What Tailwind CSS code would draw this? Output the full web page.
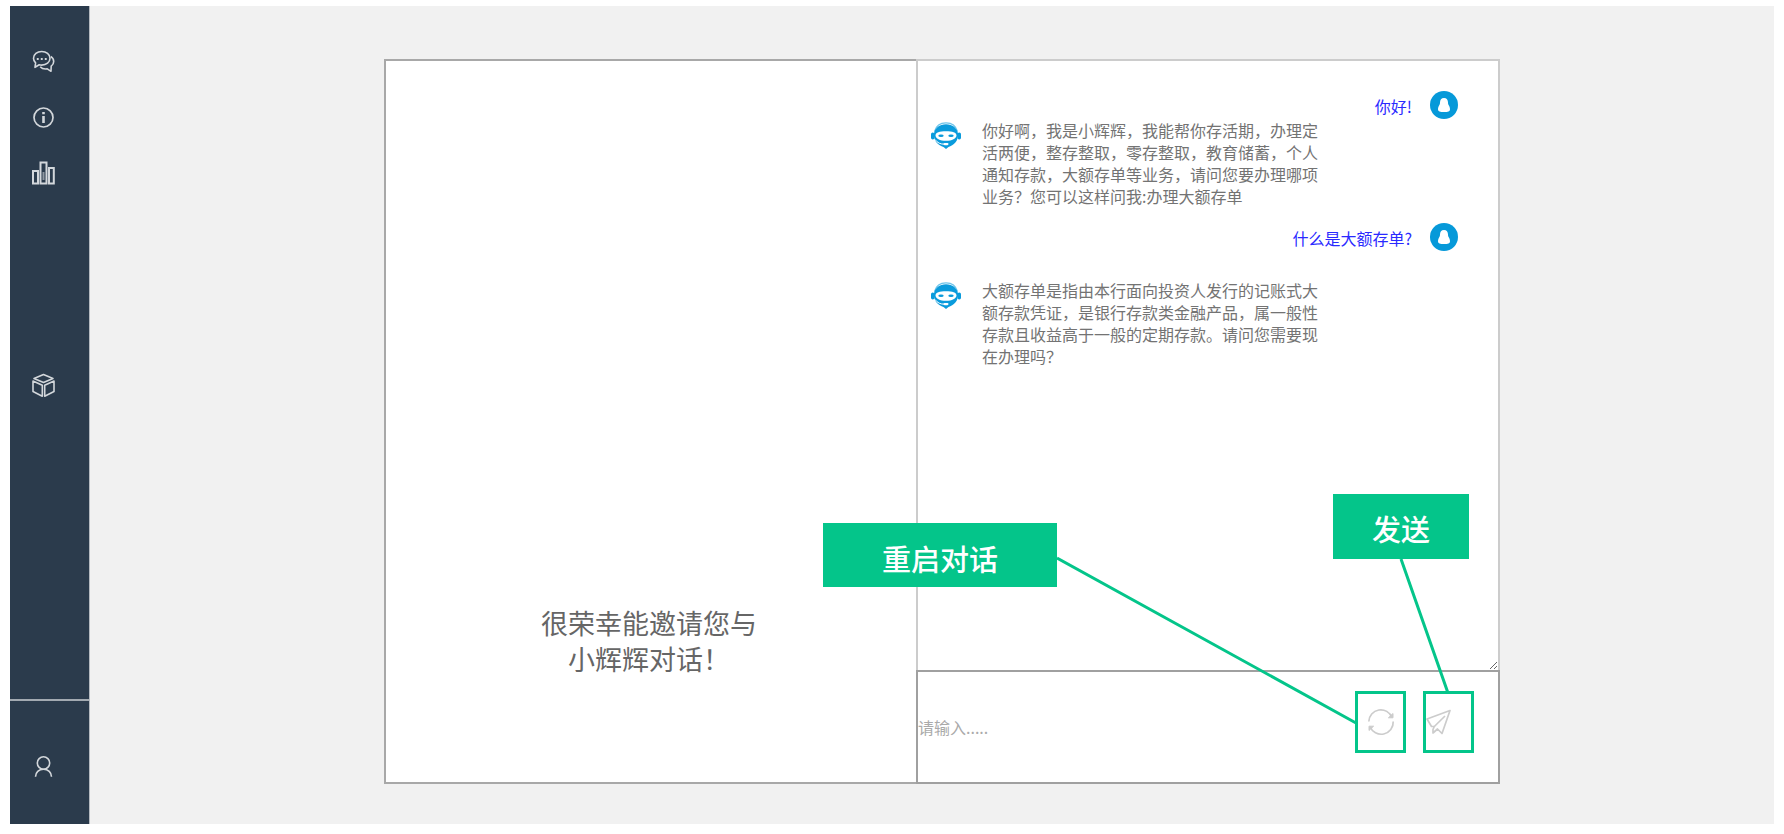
<!DOCTYPE html>
<html lang="zh-CN">
<head>
<meta charset="UTF-8">
<meta name="viewport" content="width=device-width, initial-scale=1">
<title>小辉辉对话</title>
<script src="https://cdn.jsdelivr.net/npm/@tailwindcss/browser@4"></script>
</head>
<body class="bg-white font-['Noto_Sans_CJK_SC',sans-serif]">
<svg class="hidden" aria-hidden="true">
  <symbol id="robot" viewBox="0 0 30 27">
    <path d="M3.500 9.500C5 4 9 .8 15 .8s10 3.200 11.500 8.700" fill="none" stroke="#0a9bdc" stroke-opacity=".6" stroke-width="1.200"/>
    <path d="M3 11.500C4 6 8.500 2.200 15 2.200S26 6 27 11.500c.8 7.500-4.500 12-9.500 13.500L15 27l-2.500-2C7.500 23.500 2.200 19 3 11.500z" fill="#0a9bdc"/>
    <rect x="0" y="10.500" width="3.500" height="7" rx="1.700" fill="#0a9bdc"/>
    <rect x="26.500" y="10.500" width="3.500" height="7" rx="1.700" fill="#0a9bdc"/>
    <path d="M4.500 13.500c0-3 4-4.300 10.500-4.300s10.500 1.300 10.500 4.300-4.500 5.300-10.500 5.300-10.500-2.300-10.500-5.300z" fill="#fff"/>
    <ellipse cx="10" cy="13.700" rx="2.700" ry="1.300" fill="#0a9bdc"/>
    <ellipse cx="20" cy="13.700" rx="2.700" ry="1.300" fill="#0a9bdc"/>
    <path d="M4 17.500c2.500 3.500 5.500 4.700 9.500 4.700" fill="none" stroke="#fff" stroke-width="1"/>
    <rect x="12.500" y="21" width="5" height="2.200" rx="1.100" fill="#fff"/>
  </symbol>
  <symbol id="guest" viewBox="0 0 28 28">
    <circle cx="14" cy="14" r="14" fill="#0699d9"/>
    <path d="M14 7c-2.700 0-4 2-4 4.500 0 1.200-.2 2-.9 3C8.300 15.700 8 17 8 18.500c0 2 2 2.500 6 2.500s6-.5 6-2.500c0-1.500-.3-2.800-1.100-4-.7-1-.9-1.800-.9-3C18 9 16.700 7 14 7z" fill="#fff"/>
  </symbol>
</svg>
<div class="flex min-h-screen pt-[6px] pr-[10px] pb-[10px] pl-[10px]">
  <nav class="flex w-20 shrink-0 flex-col border-r border-[#b5bac0] bg-[#2b3b4c] text-[#d3d7db]" aria-label="主导航">
    <div class="flex flex-1 flex-col items-start gap-8 pt-[43px] pl-[22px]">
      <a href="#chat" aria-label="对话">
        <svg class="size-6" viewBox="0 0 24 24" fill="none" stroke="currentColor" stroke-width="1.600" stroke-linejoin="round">
          <path d="M3.600 13.800C2.200 12.500 1.500 11 1.500 9.300c0-3.900 3.600-6.800 8.200-6.800s8.300 2.900 8.300 6.800-3.700 6.800-8.300 6.800c-.9 0-1.700-.1-2.500-.3L3 18.300z"/>
          <path d="M18.800 7.500c1.900 1.200 2.900 2.800 2.900 4.900 0 1.900-.9 3.500-2.500 4.700l-.2 5.200-3.700-2.400c-3 .5-5.500-.3-7.100-2.200"/>
          <path d="M4.800 10h1.900M8.800 10h1.900M12.800 10h1.900" stroke-width="1.800"/>
        </svg>
      </a>
      <a href="#about" aria-label="信息">
        <svg class="size-6" viewBox="0 0 24 24" fill="none" stroke="currentColor">
          <circle cx="11.500" cy="12.500" r="9.500" stroke-width="1.700"/>
          <path d="M11.500 7v2.200M11.500 11v7" stroke-width="2.600"/>
        </svg>
      </a>
      <a href="#stats" aria-label="统计">
        <svg class="size-6" viewBox="0 0 24 24" fill="none" stroke="currentColor" stroke-width="2">
          <rect x="1" y="10" width="5" height="12.500"/>
          <rect x="8.500" y="1.500" width="6" height="21"/>
          <rect x="17" y="7" width="4.800" height="15.500"/>
          <path d="M11.500 11v8" stroke-width="2" stroke-opacity=".6"/>
        </svg>
      </a>
      <a href="#products" aria-label="产品" class="mt-[156px]">
        <svg class="size-6" viewBox="0 0 24 24" fill="none" stroke="currentColor" stroke-width="1.600" stroke-linejoin="round">
          <path d="M11.500 1.500 21 5.500 11.500 9.500 2 5.500z"/>
          <path d="M1 8 10.300 12.200v11L1 18.500zM22 8l-9.300 4.200v11l9.300-4.700z"/>
        </svg>
      </a>
    </div>
    <div class="h-[125px] border-t-2 border-[#a3aab1] pt-[54px] pl-[22px]">
      <a href="#account" aria-label="账户" class="block size-6">
        <svg class="size-6" viewBox="0 0 24 24" fill="none" stroke="currentColor" stroke-width="1.600">
          <circle cx="11.500" cy="8" r="6.200"/>
          <path d="M3.500 21.800c0-4.200 3.300-7.600 8-7.600s8 3.400 8 7.600"/>
        </svg>
      </a>
    </div>
  </nav>

  <main class="grid flex-1 grid-cols-[294fr_1116fr_274fr] bg-[#f1f1f1] pt-[53px] pb-10">
    <div class="relative col-start-2 grid grid-cols-[532fr_584fr] bg-white">
      <section class="flex flex-col justify-end border-2 border-r-0 border-[#a8a8a8] pr-1 pb-[105px] text-center">
        <h1 class="text-[27px] leading-9 font-normal text-[#666]">很荣幸能邀请您与<br>小辉辉对话！</h1>
      </section>

      <section class="flex flex-col" id="chat">
        <div class="flex flex-1 resize flex-col overflow-auto border-2 border-b-0 border-[#ccc] pr-10 pl-[13px] pt-[30px]">
          <div class="flex justify-end gap-[18px]">
            <p class="pt-1 text-base leading-[22px] text-[#2a2aff]">你好!</p>
            <svg class="size-7" aria-hidden="true"><use href="#guest"/></svg>
          </div>
          <div class="flex gap-[21px]">
            <svg class="mt-[3px] h-[27px] w-[30px] shrink-0" aria-hidden="true"><use href="#robot"/></svg>
            <p class="w-[336px] text-base leading-[22px] text-[#737373]">你好啊，我是小辉辉，我能帮你存活期，办理定活两便，整存整取，零存整取，教育储蓄，个人通知存款，大额存单等业务，请问您要办理哪项业务？您可以这样问我:办理大额存单</p>
          </div>
          <div class="mt-4 flex justify-end gap-[18px]">
            <p class="pt-1 text-base leading-[22px] text-[#2a2aff]">什么是大额存单?</p>
            <svg class="size-7" aria-hidden="true"><use href="#guest"/></svg>
          </div>
          <div class="mt-7 flex gap-[21px]">
            <svg class="mt-[3px] h-[27px] w-[30px] shrink-0" aria-hidden="true"><use href="#robot"/></svg>
            <p class="w-[336px] text-base leading-[22px] text-[#737373]">大额存单是指由本行面向投资人发行的记账式大额存款凭证，是银行存款类金融产品，属一般性存款且收益高于一般的定期存款。请问您需要现在办理吗？</p>
          </div>
        </div>
        <form class="flex h-[114px] items-start gap-[17px] border-2 border-[#a0a0a0] pr-6">
          <input type="text" aria-label="请输入" placeholder="请输入....." class="h-full min-w-0 flex-1 text-base placeholder:text-[#aaa] focus:outline-none">
          <button type="button" aria-label="重启对话" class="mt-[19px] flex h-[62px] w-[51px] items-center justify-center border-3 border-[#04c58a] text-[#ccc]">
            <svg class="size-7" viewBox="0 0 28 28" fill="none" stroke="currentColor" stroke-width="1.700">
              <path d="M1.800 13.500A12 12 0 0 1 25 9.500M26.200 13.500A12 12 0 0 1 3 18.500"/>
              <path d="M26 5.500v4.300h-4.600zM2 22.500v-4.300h4.600z" fill="currentColor" stroke-width="1"/>
            </svg>
          </button>
          <button type="submit" aria-label="发送" class="mt-[19px] flex h-[62px] w-[51px] items-center justify-start border-3 border-[#04c58a] text-[#ccc]">
            <svg class="size-[26px]" viewBox="0 0 26 26" fill="none" stroke="currentColor" stroke-width="1.700" stroke-linejoin="round">
              <path d="M24 1.500 1 10l4.500 7.500h2.800L7 20.500V24l4.500-4 4.500 4.500z"/>
              <path d="M19 7 8.300 17.500"/>
            </svg>
          </button>
        </form>
      </section>

      <!-- Callouts over the chat controls -->
      <svg class="pointer-events-none absolute right-0 bottom-0 h-[290px] w-[443px]" viewBox="0 0 443 290" fill="none" stroke="#04c58a" stroke-width="3" aria-hidden="true">
        <path d="M0 64 299 229M344 65 391 199"/>
      </svg>
      <div class="absolute right-[443px] bottom-[197px] flex h-16 w-[234px] items-center justify-center bg-[#04c58a] pt-1.5 text-[29px] leading-none font-medium text-white">重启对话</div>
      <div class="absolute right-[31px] bottom-[225px] flex h-[65px] w-[136px] items-center justify-center bg-[#04c58a] pt-1 text-[29px] leading-none font-medium text-white">发送</div>
    </div>
  </main>
</div>
</body>
</html>
